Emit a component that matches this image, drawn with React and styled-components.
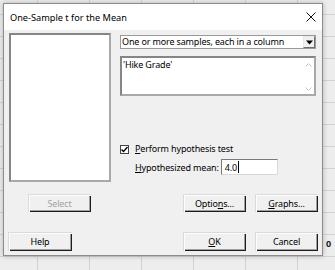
import React from 'react';
import styled, { createGlobalStyle } from 'styled-components';

const Global = createGlobalStyle`
  html, body { margin: 0; padding: 0; }
  body {
    width: 335px; height: 270px; overflow: hidden;
    font-family: "Noto Sans", "Open Sans", "DejaVu Sans", sans-serif;
    color: #000;
  }
  * { box-sizing: border-box; }
`;

const Desktop = styled.div`
  position: relative;
  width: 335px;
  height: 270px;
  overflow: hidden;
  background-color: #ededed;
  background-image:
    repeating-linear-gradient(to right, transparent 0 37px, #d2d2d2 37px 38px, transparent 38px 52px),
    repeating-linear-gradient(to bottom, transparent 0 14px, #d2d2d2 14px 15px, transparent 15px 22px);
`;

const CellText = styled.span`
  position: absolute;
  left: 326px;
  top: 237px;
  font-size: 9px;
  font-weight: 700;
  color: #222;
`;

const Window = styled.div`
  position: absolute;
  left: 3px;
  top: 3px;
  width: 320px;
  height: 253px;
  border: 1px solid #8c8c8c;
  background: #f0f0f0;
  box-shadow: 0 0 5px rgba(0, 0, 0, 0.25);
  display: flex;
  flex-direction: column;
`;

const TitleBar = styled.div`
  height: 26px;
  background: #fff;
  display: flex;
  align-items: center;
  justify-content: space-between;
  padding: 0 6px 0 6px;
  font-size: 9.2px;
  flex: none;
  white-space: nowrap;
`;

const CloseIcon = () => (
  <svg width="10" height="10" viewBox="0 0 10 10">
    <path d="M0.5 0.5 L9.5 9.5 M9.5 0.5 L0.5 9.5" stroke="#111" strokeWidth="1" fill="none" />
  </svg>
);

const Body = styled.div`
  flex: 1;
  display: flex;
  flex-direction: column;
  padding: 3px 4px 0 4px;
  font-size: 9px;
  letter-spacing: -0.15px;
  white-space: nowrap;
`;

const TopGrid = styled.div`
  display: grid;
  grid-template-columns: 102px 196px;
  column-gap: 9px;
  padding-left: 1px;
`;

const ListBox = styled.div`
  height: 149px;
  background: #fff;
  border: 2px solid;
  border-color: #858585 #a9a9a9 #a9a9a9 #858585;
`;

const RightCol = styled.div`
  display: flex;
  flex-direction: column;
  padding-top: 2px;
`;

const Combo = styled.div`
  height: 14px;
  background: #fff;
  border: 1px solid #9a9a9a;
  display: flex;
  align-items: center;
  justify-content: space-between;
  padding-left: 1px;
  line-height: 12px;
`;

const ComboButton = styled.div`
  width: 12px;
  height: 12px;
  background: #f0f0f0;
  border: 1px solid;
  border-color: #e8e8e8 #707070 #707070 #e8e8e8;
  display: flex;
  align-items: center;
  justify-content: center;
`;

const TextArea = styled.div`
  margin-top: 7px;
  height: 40px;
  background: #fff;
  border: 2px solid;
  border-color: #858585 #a9a9a9 #a9a9a9 #858585;
  display: flex;
  justify-content: space-between;
  padding: 1px 0 0 1px;
  line-height: 12px;
`;

const ScrollCol = styled.div`
  width: 12px;
  display: flex;
  flex-direction: column;
  justify-content: space-between;
  align-items: center;
  padding: 4px 0 3px;
`;

const CheckRow = styled.label`
  margin-top: 48px;
  height: 10px;
  display: flex;
  align-items: center;
  gap: 6px;
  line-height: 10px;
`;

const CheckBox = styled.span`
  width: 9px;
  height: 9px;
  background: #fff;
  border: 1px solid #444;
  display: flex;
  align-items: center;
  justify-content: center;
`;

const HypRow = styled.div`
  margin-top: 5px;
  height: 16px;
  display: flex;
  gap: 2px;
  padding-left: 15px;
  align-items: center;
`;

const Input = styled.div`
  width: 57px;
  height: 16px;
  background: #fff;
  border: 1px solid;
  border-color: #7a7a7a #d8d8d8 #d8d8d8 #7a7a7a;
  padding: 0 3px;
  display: flex;
  align-items: center;
`;

const Caret = styled.span`
  display: inline-block;
  width: 1px;
  height: 12px;
  background: #000;
  margin-left: 1px;
`;

const U = styled.span`
  text-decoration: underline;
  text-underline-offset: 1px;
`;

const ButtonRow = styled.div`
  display: flex;
  align-items: center;
  margin-top: ${(p) => p.$top}px;
  gap: 9px;
`;

const Spacer = styled.div`
  flex: 1;
`;

const Button = styled.button`
  width: ${(p) => p.$w || 63}px;
  height: ${(p) => p.$h || 18}px;
  margin-left: ${(p) => p.$ml || 0}px;
  padding: 0;
  border: none;
  background: #f0f0f0;
  box-shadow:
    inset 1px 1px 0 #dadada,
    inset 2px 2px 0 #fdfdfd,
    inset -1px -1px 0 #1c1c1c,
    inset -2px -2px 0 #a0a0a0;
  font-family: inherit;
  font-size: 9px;
  letter-spacing: -0.15px;
  color: ${(p) => (p.disabled ? '#a3a3a3' : '#000')};
  display: flex;
  align-items: center;
  justify-content: center;
  flex: none;
`;

const Chevron = ({ up }) => (
  <svg width="7" height="4" viewBox="0 0 7 4">
    <path d={up ? 'M0.5 3.5 L3.5 0.5 L6.5 3.5' : 'M0.5 0.5 L3.5 3.5 L6.5 0.5'} stroke="#c4c4c4" strokeWidth="1" fill="none" />
  </svg>
);

export default function App() {
  return (
    <Desktop>
      <Global />
      <CellText>0</CellText>
      <Window>
        <TitleBar>
          <span>One-Sample t for the Mean</span>
          <CloseIcon />
        </TitleBar>
        <Body>
          <TopGrid>
            <ListBox />
            <RightCol>
              <Combo>
                <span>One or more samples, each in a column</span>
                <ComboButton>
                  <svg width="7" height="5" viewBox="0 0 7 5">
                    <path d="M0 0.5 H7 L3.5 4.5 Z" fill="#000" />
                  </svg>
                </ComboButton>
              </Combo>
              <TextArea>
                <span>'Hike Grade'</span>
                <ScrollCol>
                  <Chevron up />
                  <Chevron />
                </ScrollCol>
              </TextArea>
              <CheckRow>
                <CheckBox>
                  <svg width="7" height="7" viewBox="0 0 7 7">
                    <path d="M0.5 3.5 L2.5 5.5 L6.5 1" stroke="#000" strokeWidth="1.4" fill="none" />
                  </svg>
                </CheckBox>
                <span><U>P</U>erform hypothesis test</span>
              </CheckRow>
              <HypRow>
                <span><U>H</U>ypothesized mean:</span>
                <Input>
                  <span>4.0</span>
                  <Caret />
                </Input>
              </HypRow>
            </RightCol>
          </TopGrid>
          <ButtonRow $top={12}>
            <Button disabled $ml={20}>Select</Button>
            <Spacer />
            <Button>Optio<U>n</U>s...</Button>
            <Button><U>G</U>raphs...</Button>
          </ButtonRow>
          <ButtonRow $top={20}>
            <Button $w={64} $h={19}>Help</Button>
            <Spacer />
            <Button $h={19}><U>O</U>K</Button>
            <Button $h={19}>Cancel</Button>
          </ButtonRow>
        </Body>
      </Window>
    </Desktop>
  );
}
